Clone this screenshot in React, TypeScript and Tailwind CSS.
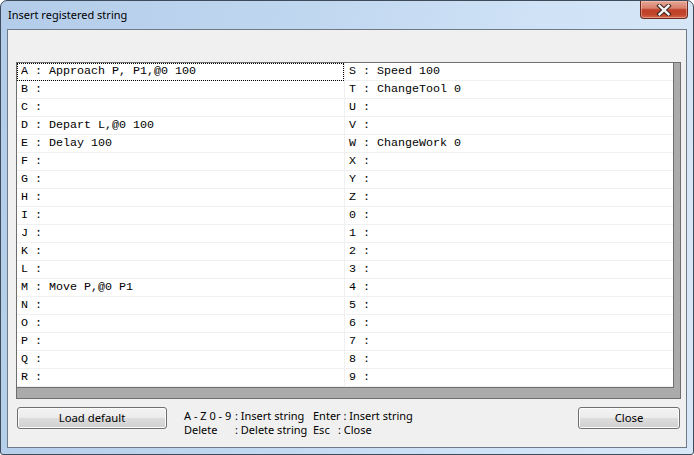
import React from "react";

const col1 = [
  "A : Approach P, P1,@0 100",
  "B :",
  "C :",
  "D : Depart L,@0 100",
  "E : Delay 100",
  "F :",
  "G :",
  "H :",
  "I :",
  "J :",
  "K :",
  "L :",
  "M : Move P,@0 P1",
  "N :",
  "O :",
  "P :",
  "Q :",
  "R :",
];
const col2 = [
  "S : Speed 100",
  "T : ChangeTool 0",
  "U :",
  "V :",
  "W : ChangeWork 0",
  "X :",
  "Y :",
  "Z :",
  "0 :",
  "1 :",
  "2 :",
  "3 :",
  "4 :",
  "5 :",
  "6 :",
  "7 :",
  "8 :",
  "9 :",
];

const ui = { fontFamily: '"Noto Sans", "Liberation Sans", Arial, sans-serif' };
const mono = { fontFamily: '"Liberation Mono", "Courier New", monospace' };

function WinButton({ label, w }: { label: string; w: string }) {
  return (
    <div
      className={`${w} h-[22px] flex items-center justify-center rounded-[3px] border border-[#707070] bg-[linear-gradient(to_bottom,#f3f3f3_0%,#ebebeb_50%,#dddddd_51%,#d0d0d0_100%)] shadow-[inset_0_0_0_1px_#fbfbfb] text-[11.3px] text-black`}
      style={ui}
    >
      {label}
    </div>
  );
}

export default function App() {
  return (
    <div className="w-[694px] h-[455px] flex flex-col overflow-hidden rounded-t-[7px] rounded-b-[3px] border border-[#3d4b5b] bg-[linear-gradient(100deg,#b3cce9_0%,#c0d7f0_40%,#cfe2f6_70%,#d9e8f8_100%)]">
      {/* Title bar */}
      <div className="h-[28px] flex items-start justify-between shrink-0">
        <div className="h-[28px] flex items-center pl-[7px] text-[11px] text-black" style={ui}>
          Insert registered string
        </div>
        <div className="mr-[5px] w-[48px] h-[18px] flex items-center justify-center rounded-b-[4px] border border-t-0 border-[#6a2a22] bg-[linear-gradient(to_bottom,#e6a797_0%,#d8806c_42%,#c0402a_52%,#c2452c_80%,#d2694e_100%)] shadow-[inset_0_0_0_1px_rgba(255,220,210,0.4)]">
          <svg width="16" height="12" viewBox="0 0 16 12">
            <path d="M3.5 1.8 L12.5 10.2 M12.5 1.8 L3.5 10.2" stroke="#3a2520" strokeWidth="4.4" strokeLinecap="square" fill="none" />
            <path d="M3.5 1.8 L12.5 10.2 M12.5 1.8 L3.5 10.2" stroke="#f4f4f4" strokeWidth="2.4" strokeLinecap="square" fill="none" />
          </svg>
        </div>
      </div>

      {/* Client area */}
      <div className="mx-[6px] h-[419px] shrink-0 border border-[#6e7a88] bg-[#f0f0f0] flex flex-col">
        {/* List */}
        <div className="ml-[8px] mt-[32px] w-[665px] h-[337px] border border-[#6e6e6e] bg-[#ababab]">
          <div className="w-[657px] border-r border-b border-[#6e6e6e] bg-white grid grid-cols-[328px_328px]">
            <div className="flex flex-col border-r border-[#f0f0f0]">
              {col1.map((t, i) => (
                <div
                  key={t}
                  className={`h-[18px] border-b border-[#f0f0f0] flex items-center pl-[4px] text-[11.67px] text-black whitespace-pre ${
                    i === 0 ? "outline-1 outline-dotted outline-black -outline-offset-1" : ""
                  }`}
                  style={mono}
                >
                  {t}
                </div>
              ))}
            </div>
            <div className="flex flex-col">
              {col2.map((t) => (
                <div
                  key={t}
                  className="h-[18px] border-b border-[#f0f0f0] flex items-center pl-[4px] text-[11.67px] text-black whitespace-pre"
                  style={mono}
                >
                  {t}
                </div>
              ))}
            </div>
          </div>
        </div>

        {/* Bottom row */}
        <div className="mt-[8px] flex items-start">
          <div className="ml-[9px]">
            <WinButton label="Load default" w="w-[150px]" />
          </div>
          <div className="ml-[17px] pt-[2px] flex flex-col text-[11px] leading-[14px] text-black" style={ui}>
            <div className="flex whitespace-pre">
              <span className="w-[51px]">A - Z 0 - 9</span>
              <span className="w-[78px]">: Insert string</span>
              <span>Enter : Insert string</span>
            </div>
            <div className="flex whitespace-pre">
              <span className="w-[51px]">Delete</span>
              <span className="w-[78px]">: Delete string</span>
              <span className="w-[25px]">Esc</span>
              <span>: Close</span>
            </div>
          </div>
          <div className="ml-auto mr-[6px]">
            <WinButton label="Close" w="w-[102px]" />
          </div>
        </div>
      </div>
    </div>
  );
}
